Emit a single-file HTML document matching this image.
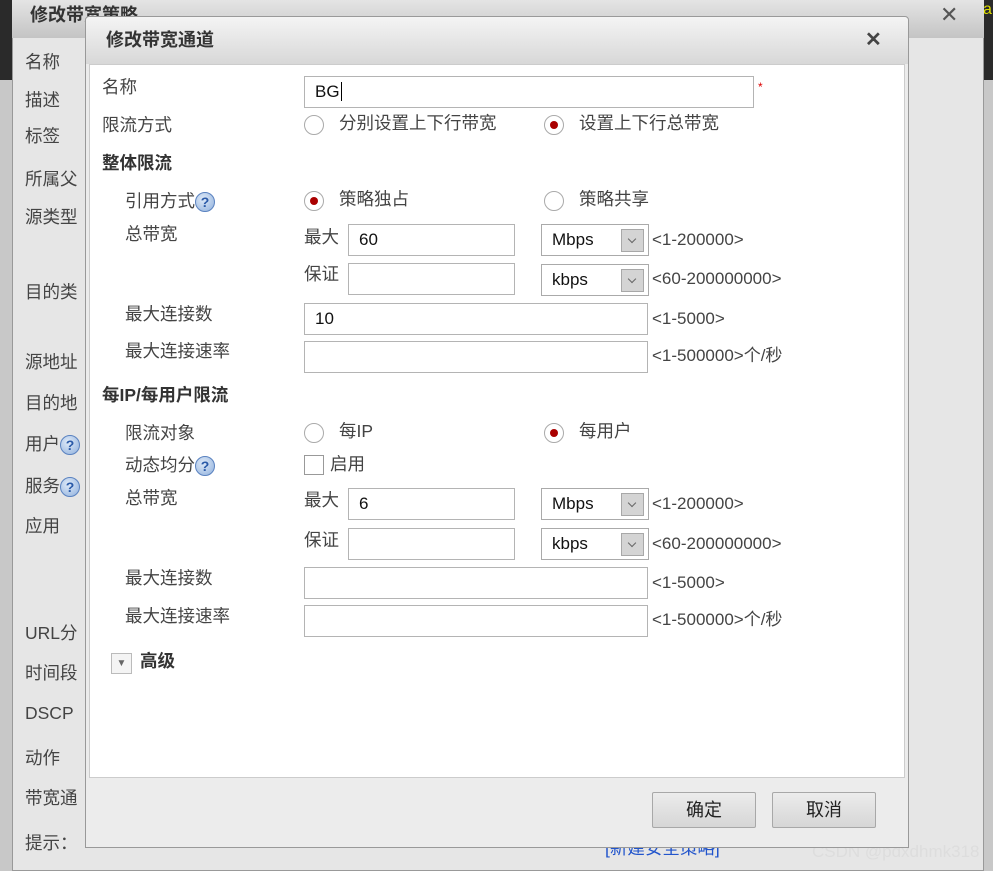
<!DOCTYPE html>
<html><head><meta charset="utf-8"><style>
*{margin:0;padding:0;box-sizing:border-box}
body{width:993px;height:871px;overflow:hidden;position:relative;background:#c8c8c8;font-family:"Liberation Sans","Noto Sans CJK SC",sans-serif;color:#444;font-size:17.5px;line-height:1.2}
.a{position:absolute;white-space:nowrap}
.in{position:absolute;background:#fff;border:1px solid #b4b4b4;height:32px;padding-left:10px;line-height:30px;font-size:17px;color:#111}
.sel{position:absolute;background:#fff;border:1px solid #aaa;height:32px;width:108px;padding-left:10px;line-height:30px;font-size:17px;color:#111}
.sel i{position:absolute;right:4px;top:4px;width:23px;height:23px;background:#d4d4d4;border:1px solid #a8a8a8}
.sel i:after{content:"";position:absolute;left:7px;top:6px;width:5px;height:5px;border-right:1.5px solid #666;border-bottom:1.5px solid #666;transform:rotate(45deg)}
.r{position:absolute;width:20px;height:20px;border-radius:50%;border:1px solid #aaa;background:#fff}
.r.on:after{content:"";position:absolute;left:5px;top:5px;width:8px;height:8px;border-radius:50%;background:#a00}
.q{display:inline-block;width:20px;height:20px;border-radius:50%;background:radial-gradient(circle at 40% 35%,#dfeaf8,#8fb0dc);border:1px solid #5a82c0;color:#2a5aa8;font-weight:bold;font-size:14px;line-height:18px;text-align:center;vertical-align:middle}
.h{font-weight:bold;color:#333}
.n{font-size:17px}
.btn{position:absolute;width:104px;height:36px;border:1px solid #a8a8a8;background:linear-gradient(#ececec,#d6d6d6);text-align:center;line-height:34px;font-size:18px;color:#222;border-radius:2px}
</style></head><body>
<div class="a" style="left:0;top:0;width:993px;height:80px;background:#2a2a2a"></div>
<div class="a" style="left:983px;top:0;color:#dd0;font-size:16px">a</div>
<div class="a" style="left:12px;top:0;width:972px;height:871px;background:#e6e6e6;border:1px solid #999"></div>
<div class="a" style="left:12px;top:0;width:972px;height:38px;background:linear-gradient(#e4e4e4,#c4c4c4)"></div>
<div class="a h" style="left:30px;top:5px;font-size:18px">修改带宽策略</div>
<div class="a" style="left:940px;top:2px;font-size:22px;color:#555">✕</div>
<div class="a" style="left:25px;top:52px">名称</div>
<div class="a" style="left:25px;top:90px">描述</div>
<div class="a" style="left:25px;top:126px">标签</div>
<div class="a" style="left:25px;top:169px">所属父</div>
<div class="a" style="left:25px;top:207px">源类型</div>
<div class="a" style="left:25px;top:282px">目的类</div>
<div class="a" style="left:25px;top:352px">源地址</div>
<div class="a" style="left:25px;top:393px">目的地</div>
<div class="a" style="left:25px;top:434px">用户<span class="q">?</span></div>
<div class="a" style="left:25px;top:476px">服务<span class="q">?</span></div>
<div class="a" style="left:25px;top:516px">应用</div>
<div class="a" style="left:25px;top:623px">URL分</div>
<div class="a" style="left:25px;top:663px">时间段</div>
<div class="a" style="left:25px;top:703px">DSCP</div>
<div class="a" style="left:25px;top:748px">动作</div>
<div class="a" style="left:25px;top:788px">带宽通</div>
<div class="a" style="left:25px;top:833px">提示：</div>
<div class="a" style="left:605px;top:838px;color:#2255cc">[新建安全策略]</div>
<div class="a" style="left:812px;top:842px;color:#ddd;font-size:17px">CSDN @pdxdhmk318</div>
<div class="a" style="left:85px;top:16px;width:824px;height:832px;background:#ececec;border:1px solid #999;border-radius:4px 4px 0 0"></div>
<div class="a" style="left:86px;top:17px;width:822px;height:47px;background:linear-gradient(#f4f4f4,#d8d8d8);border-radius:4px 4px 0 0"></div>
<div class="a h" style="left:106px;top:30px;font-size:18px">修改带宽通道</div>
<div class="a" style="left:865px;top:28px;font-size:20px;font-weight:bold;color:#444">✕</div>
<div class="a" style="left:89px;top:64px;width:816px;height:714px;background:#fff;border:1px solid #ccc"></div>

<div class="a" style="left:102px;top:77px">名称</div>
<div class="in" style="left:304px;top:76px;width:450px">BG<span style="border-left:1.5px solid #000;margin-left:1px"></span></div>
<div class="a" style="left:758px;top:80px;color:#d00;font-size:12px">*</div>
<div class="a" style="left:102px;top:115px">限流方式</div>
<div class="r" style="left:304px;top:115px"></div><div class="a" style="left:339px;top:113px">分别设置上下行带宽</div>
<div class="r on" style="left:544px;top:115px"></div><div class="a" style="left:579px;top:113px">设置上下行总带宽</div>
<div class="a h" style="left:102px;top:153px">整体限流</div>
<div class="a" style="left:125px;top:191px">引用方式<span class="q">?</span></div>
<div class="r on" style="left:304px;top:191px"></div><div class="a" style="left:339px;top:189px">策略独占</div>
<div class="r" style="left:544px;top:191px"></div><div class="a" style="left:579px;top:189px">策略共享</div>
<div class="a" style="left:125px;top:224px">总带宽</div>
<div class="a" style="left:304px;top:227px">最大</div>
<div class="in" style="left:348px;top:224px;width:167px">60</div>
<div class="sel" style="left:541px;top:224px">Mbps<i></i></div>
<div class="a n" style="left:652px;top:230px">&lt;1-200000&gt;</div>
<div class="a" style="left:304px;top:264px">保证</div>
<div class="in" style="left:348px;top:263px;width:167px"></div>
<div class="sel" style="left:541px;top:264px">kbps<i></i></div>
<div class="a n" style="left:652px;top:269px">&lt;60-200000000&gt;</div>
<div class="a" style="left:125px;top:304px">最大连接数</div>
<div class="in" style="left:304px;top:303px;width:344px">10</div>
<div class="a n" style="left:652px;top:309px">&lt;1-5000&gt;</div>
<div class="a" style="left:125px;top:341px">最大连接速率</div>
<div class="in" style="left:304px;top:341px;width:344px"></div>
<div class="a n" style="left:652px;top:346px">&lt;1-500000&gt;个/秒</div>
<div class="a h" style="left:102px;top:385px">每IP/每用户限流</div>
<div class="a" style="left:125px;top:423px">限流对象</div>
<div class="r" style="left:304px;top:423px"></div><div class="a" style="left:339px;top:421px">每IP</div>
<div class="r on" style="left:544px;top:423px"></div><div class="a" style="left:579px;top:421px">每用户</div>
<div class="a" style="left:125px;top:455px">动态均分<span class="q">?</span></div>
<div class="a" style="left:304px;top:455px;width:20px;height:20px;border:1px solid #999;background:#fff"></div>
<div class="a" style="left:330px;top:454px">启用</div>
<div class="a" style="left:125px;top:488px">总带宽</div>
<div class="a" style="left:304px;top:490px">最大</div>
<div class="in" style="left:348px;top:488px;width:167px">6</div>
<div class="sel" style="left:541px;top:488px">Mbps<i></i></div>
<div class="a n" style="left:652px;top:494px">&lt;1-200000&gt;</div>
<div class="a" style="left:304px;top:530px">保证</div>
<div class="in" style="left:348px;top:528px;width:167px"></div>
<div class="sel" style="left:541px;top:528px">kbps<i></i></div>
<div class="a n" style="left:652px;top:534px">&lt;60-200000000&gt;</div>
<div class="a" style="left:125px;top:568px">最大连接数</div>
<div class="in" style="left:304px;top:567px;width:344px"></div>
<div class="a n" style="left:652px;top:573px">&lt;1-5000&gt;</div>
<div class="a" style="left:125px;top:606px">最大连接速率</div>
<div class="in" style="left:304px;top:605px;width:344px"></div>
<div class="a n" style="left:652px;top:610px">&lt;1-500000&gt;个/秒</div>
<div class="a" style="left:111px;top:653px;width:21px;height:21px;border:1px solid #bbb;background:#f4f4f4;font-size:10px;color:#666;text-align:center;line-height:19px">▼</div>
<div class="a h" style="left:140px;top:651px">高级</div>

<div class="btn" style="left:652px;top:792px">确定</div>
<div class="btn" style="left:772px;top:792px">取消</div>
</body></html>
